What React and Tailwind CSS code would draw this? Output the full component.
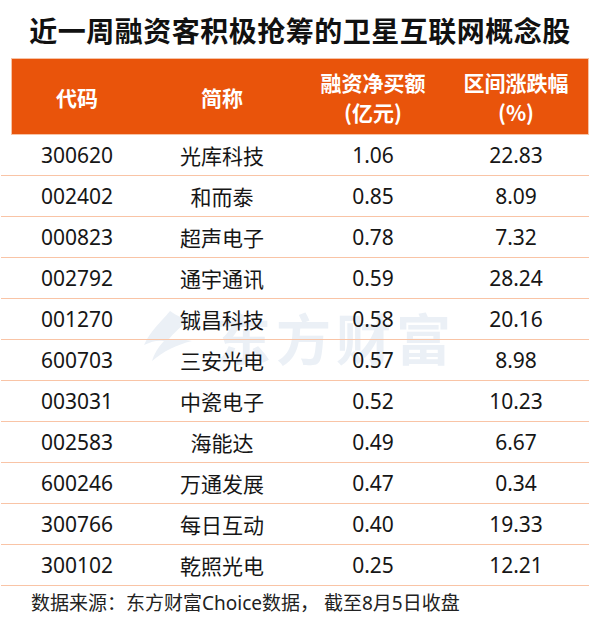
import React from "react";

const rows = [
  ["300620", "光库科技", "1.06", "22.83"],
  ["002402", "和而泰", "0.85", "8.09"],
  ["000823", "超声电子", "0.78", "7.32"],
  ["002792", "通宇通讯", "0.59", "28.24"],
  ["001270", "铖昌科技", "0.58", "20.16"],
  ["600703", "三安光电", "0.57", "8.98"],
  ["003031", "中瓷电子", "0.52", "10.23"],
  ["002583", "海能达", "0.49", "6.67"],
  ["600246", "万通发展", "0.47", "0.34"],
  ["300766", "每日互动", "0.40", "19.33"],
  ["300102", "乾照光电", "0.25", "12.21"],
];

const FONT = { fontFamily: '"Noto Sans", "Noto Sans CJK SC", sans-serif' };
const CJK = { fontFamily: '"Noto Sans CJK SC", "Noto Sans", sans-serif' };

export default function App() {
  return (
    <div className="relative w-[600px] h-[631px] bg-white overflow-hidden" style={FONT}>
      {/* watermark */}
      <div className="absolute left-[140px] top-[307px] flex items-center z-0 pointer-events-none select-none">
        <svg width="66" height="58" viewBox="0 0 66 58" className="mr-[10px]">
          <path
            d="M30 4 C22 14 10 24 4 38 C12 34 18 33 24 34 C18 40 14 47 12 54 C24 44 36 38 52 34 C42 32 34 32 28 33 C34 26 42 18 50 12 C42 12 36 8 30 4 Z"
            fill="#ebf0f6"
          />
        </svg>
        <span className="text-[55px] leading-[55px] font-bold tracking-[5px] text-[#ebf0f6]" style={CJK}>
          东方财富
        </span>
      </div>

      <div className="relative z-10 flex flex-col">
        <div className="h-[58px] flex items-center justify-center pt-[2px]">
          <h1 className="text-[28px] leading-[32px] font-bold tracking-[0.5px] text-[#111]" style={CJK}>
            近一周融资客积极抢筹的卫星互联网概念股
          </h1>
        </div>

        <div className="ml-[11px] w-[578px] h-[77px] border border-[#f7c3a5] bg-[#e9540b]">
          <div className="grid grid-cols-[130px_160px_142px_144px] h-full items-center text-white font-bold text-[21px] leading-[30px] text-center" style={CJK}>
            <div>代码</div>
            <div>简称</div>
            <div>
              <div>融资净买额</div>
              <div>(亿元)</div>
            </div>
            <div>
              <div>区间涨跌幅</div>
              <div>(%)</div>
            </div>
          </div>
        </div>

        <div className="ml-[1px] w-[588px]">
          {rows.map((r) => (
            <div
              key={r[0]}
              className="h-[41px] border-b border-[#f9c4a6] pl-[11px] grid grid-cols-[130px_160px_142px_144px] items-center text-center text-[21px] leading-[28px] text-[#161616]"
            >
              <div>{r[0]}</div>
              <div style={CJK}>{r[1]}</div>
              <div>{r[2]}</div>
              <div>{r[3]}</div>
            </div>
          ))}
        </div>

        <div className="mt-[5px] pl-[31px] h-[24px] leading-[24px] text-[19px] text-[#222]">
          数据来源：东方财富Choice数据， 截至8月5日收盘
        </div>
      </div>
    </div>
  );
}
